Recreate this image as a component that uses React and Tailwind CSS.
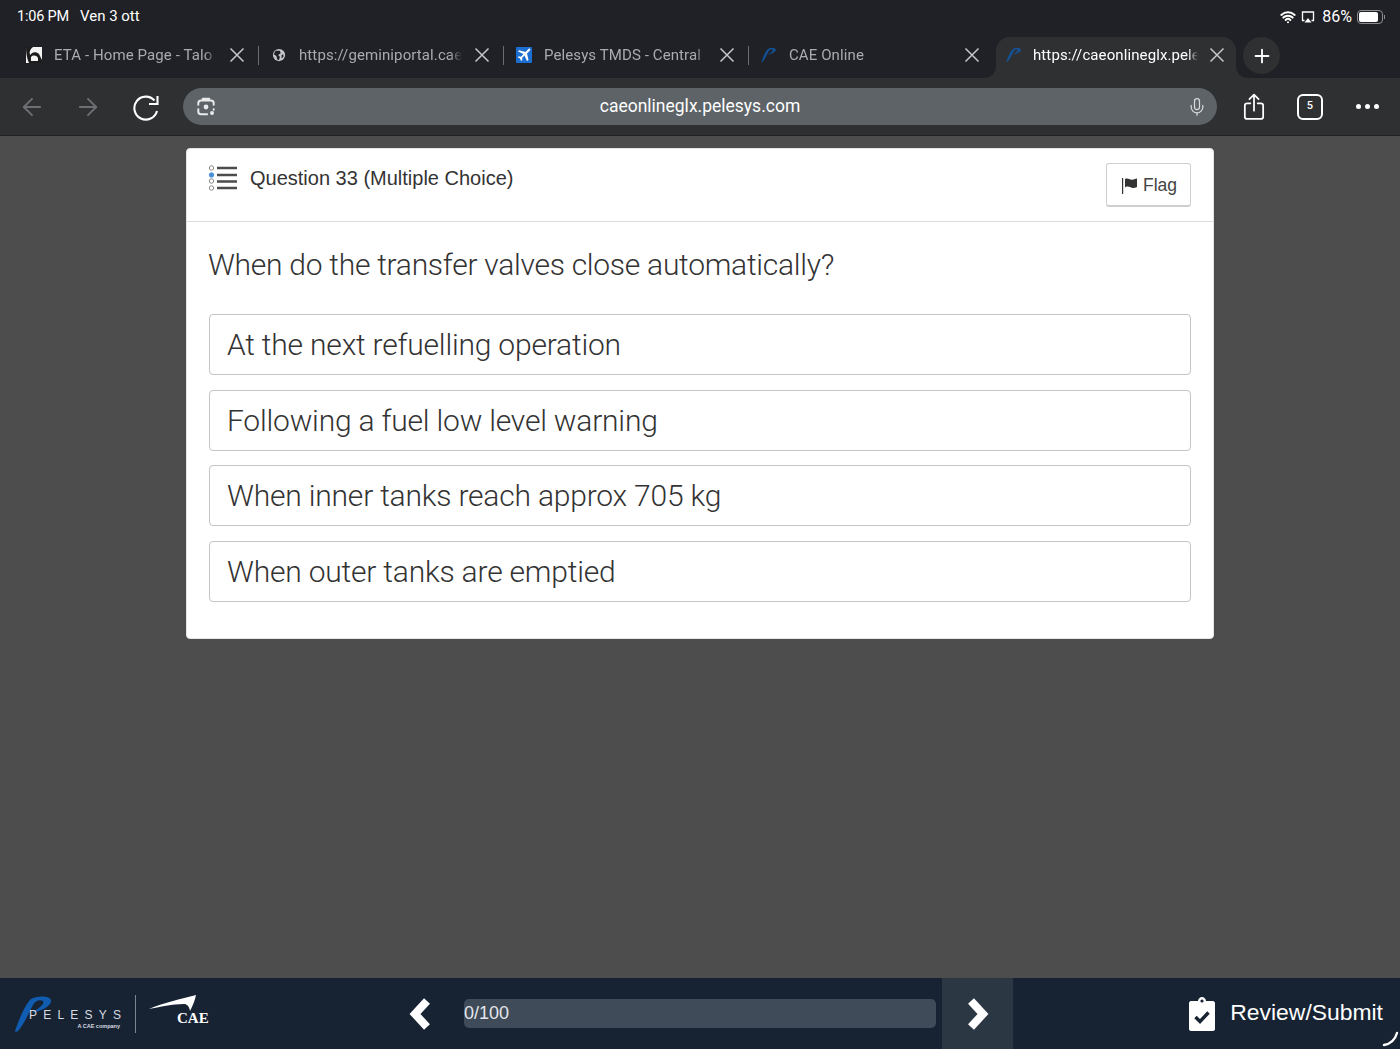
import React from 'react';
import { ArrowLeft, ArrowRight, Mic, Plus, Wifi } from 'lucide-react';

const tabs = [
  { title: 'ETA - Home Page - Talo', icon: 'eta' },
  { title: 'https://geminiportal.cae', icon: 'globe' },
  { title: 'Pelesys TMDS - Central', icon: 'plane' },
  { title: 'CAE Online', icon: 'pelesys' },
];

const answers = [
  'At the next refuelling operation',
  'Following a fuel low level warning',
  'When inner tanks reach approx 705 kg',
  'When outer tanks are emptied',
];

const PelesysMark = ({ className }) => (
  <svg viewBox="0 0 40 36" className={className}>
    <path d="M1 35 C5 24 10 10 17 3 C22 0 35 -1 37 4 C38 10 28 15 17 17 C24 13 31 8 29 5 C26 3 21 5 19 9 C15 16 11 27 4 35 C3 36 1 36 1 35 Z" fill="#0f5cb0" />
  </svg>
);

const CloseX = () => (
  <svg viewBox="0 0 16 16" className="w-4 h-4 shrink-0" fill="none" stroke="#c5c7ca" strokeWidth="1.5">
    <path d="M1.5 1.5 L14.5 14.5 M14.5 1.5 L1.5 14.5" />
  </svg>
);

const TabIcon = ({ type }) => {
  if (type === 'eta') {
    return (
      <svg viewBox="0 0 16 16" className="w-4 h-4 shrink-0">
        <rect width="16" height="16" fill="#f4f4f4" />
        <path d="M0 0 H7 C4 2 3 5 4 8 C6 5 10 4 13 7 L16 13 V16 H3 C1 12 0 6 0 0 Z" fill="#1c1c1c" />
        <path d="M5 10 C7 8 10 8 12 11 L12 14 H5 Z" fill="#f4f4f4" />
      </svg>
    );
  }
  if (type === 'globe') {
    return (
      <svg viewBox="0 0 16 16" className="w-3.5 h-3.5 shrink-0 mx-px">
        <circle cx="8" cy="8" r="7" fill="#c4c6c9" />
        <path d="M4 3 L9 3 L10 6 L7 8 L9 10 L8 14 L6 13 L5 9 L2 7 Z" fill="#1f2126" />
        <path d="M11 8 L13 7 L13 10 L11 12 Z" fill="#1f2126" />
      </svg>
    );
  }
  if (type === 'plane') {
    return (
      <svg viewBox="0 0 16 16" className="w-4 h-4 shrink-0">
        <rect width="16" height="16" rx="1" fill="#1c6fd1" />
        <path d="M13.5 1.5 C14.5 2 14.5 3 13.5 4 L11 6.5 L12.5 13 L11 14 L8.5 8.5 L6 11 L6.3 13 L5.2 14 L4 11.5 L1.8 10.3 L2.8 9.3 L5 9.7 L7.5 7 L2 4.5 L3 3.3 L9.5 5 L12 2.5 C12.5 2 13 1.3 13.5 1.5 Z" fill="#fff" />
      </svg>
    );
  }
  return <PelesysMark className="w-4 h-4 shrink-0 opacity-80" />;
};

const ReloadIcon = () => (
  <svg viewBox="0 0 28 28" className="w-7 h-7" fill="none" stroke="#fff" strokeWidth="2.1">
    <path d="M22.5 7.5 A11.5 11.5 0 1 0 25 18" />
    <path d="M25.5 3 V11 H17" />
  </svg>
);

const ShareIcon = () => (
  <svg viewBox="0 0 24 30" className="w-[22px] h-[28px]" fill="none" stroke="#fff" strokeWidth="1.9" strokeLinecap="round" strokeLinejoin="round">
    <path d="M12 19 V2 M7 6.5 L12 1.5 L17 6.5" />
    <path d="M8 11 H4.5 C3 11 2 12 2 13.5 V25.5 C2 27 3 28 4.5 28 H19.5 C21 28 22 27 22 25.5 V13.5 C22 12 21 11 19.5 11 H16" />
  </svg>
);

const LensIcon = () => (
  <svg viewBox="0 0 20 20" className="w-[22px] h-[22px]" fill="none" stroke="#e8eaec" strokeWidth="1.8" strokeLinecap="round">
    <path d="M7 2.5 H13 M3 8 V6.5 C3 5 4 4 5.5 4 H14.5 C16 4 17 5 17 6.5 V8 M3 12 V14 C3 15.5 4 16.5 5.5 16.5 H11" />
    <path d="M17 12 V12.5" />
    <circle cx="10" cy="10" r="2.2" fill="#e8eaec" stroke="none" />
    <circle cx="15.5" cy="15.5" r="1.8" fill="#e8eaec" stroke="none" />
  </svg>
);

const ListIcon = () => (
  <svg viewBox="0 0 30 26" className="w-[30px] h-[26px] shrink-0">
    {[2, 9, 15, 22].map((y, i) => (
      <circle key={y} cx="3.5" cy={y + 1} r="2.2" fill={i === 1 ? '#4a90d9' : '#fff'} stroke={i === 1 ? '#4a90d9' : '#8a8a8a'} strokeWidth="1" />
    ))}
    <path d="M9 3 H29 M9 10 H29 M9 16.5 H29 M9 23 H29" stroke="#4c4c4c" strokeWidth="2.6" />
  </svg>
);

const FlagIcon = () => (
  <svg viewBox="0 0 16 18" className="w-4 h-[18px]" fill="#333">
    <rect x="0" y="1" width="1.2" height="16" />
    <path d="M3 2 C6 0.5 8 3.5 11 2.5 C13 2 15 1.5 15 1.5 V10 C12 11.5 10 11 8 10 C6 9 4 9.5 3 10.5 Z" />
  </svg>
);

const ClipboardIcon = () => (
  <svg viewBox="0 0 26 34" className="w-[26px] h-[34px] shrink-0">
    <path d="M2 4 H9 C9 2 11 0 13 0 C15 0 17 2 17 4 H24 C25 4 26 5 26 6 V32 C26 33 25 34 24 34 H2 C1 34 0 33 0 32 V6 C0 5 1 4 2 4 Z" fill="#fff" />
    <circle cx="13" cy="4" r="1.6" fill="#172333" />
    <path d="M6.5 20 L11 24.5 L19.5 15.5" fill="none" stroke="#172333" strokeWidth="3.4" />
  </svg>
);

const Chevron = ({ dir }) => (
  <svg viewBox="0 0 24 34" className="w-6 h-[34px]">
    <path d={dir === 'left' ? 'M20 4 L8 17 L20 30' : 'M4 4 L16 17 L4 30'} fill="none" stroke="#fff" strokeWidth="8" />
  </svg>
);

const App = () => {
  return (
    <div className="w-[1400px] h-[1049px] flex flex-col overflow-hidden bg-[#4d4d4d] font-['Liberation_Sans',sans-serif]">
      {/* Browser chrome */}
      <div className="h-[78px] shrink-0 bg-[#1f2126] font-['Roboto',sans-serif]">
        <div className="h-[37px] pl-[17px] pr-[15px] pb-[4px] flex items-center justify-between text-white text-[15px]">
          <div className="flex items-center gap-[11px]">
            <span className="text-[14.5px] tracking-[-0.2px]">1:06 PM</span>
            <span>Ven 3 ott</span>
          </div>
          <div className="flex items-center gap-[5px]">
            <Wifi className="w-4 h-4" strokeWidth={3} />
            <svg viewBox="0 0 14 14" className="w-3.5 h-3.5" fill="none" stroke="#fff" strokeWidth="1.3">
              <path d="M3.5 10.5 H1.5 V2 H12.5 V10.5 H10.5" />
              <path d="M7 8 L10.5 12.5 H3.5 Z" fill="#fff" stroke="none" />
            </svg>
            <span className="ml-[2px] text-[16px]">86%</span>
            <div className="w-[26px] h-[14px] rounded-[4px] border border-[#8a8c90] p-[1px]">
              <div className="w-[86%] h-full rounded-[2px] bg-white" />
            </div>
            <div className="-ml-1 w-px h-1 bg-[#8a8c90]" />
          </div>
        </div>
        <div className="h-[41px] flex items-stretch pl-[12px]">
          {tabs.map((tab, i) => (
            <div key={tab.title} className="w-[245px] pb-[5px] flex items-center pl-[14px] relative">
              <TabIcon type={tab.icon} />
              <span className="ml-[12px] w-[163px] whitespace-nowrap text-[15px] tracking-[0.1px] text-[#a9abaf] [mask-image:linear-gradient(to_left,transparent,black_12px)]">{tab.title}</span>
              <div className="ml-[12px]"><CloseX /></div>
              {i < 3 && <div className="absolute -right-[2px] top-[9px] w-px h-[19px] bg-[#6b6d71]" />}
            </div>
          ))}
          <div className="ml-[4px] w-[240px] pb-[5px] relative rounded-t-[14px] bg-[#2e3032] flex items-center pl-[10px]">
            <svg viewBox="0 0 12 12" className="absolute -left-[12px] bottom-0 w-3 h-3"><path d="M12 0 V12 H0 C7 12 12 7 12 0 Z" fill="#2e3032" /></svg>
            <svg viewBox="0 0 12 12" className="absolute -right-[12px] bottom-0 w-3 h-3"><path d="M0 0 V12 H12 C5 12 0 7 0 0 Z" fill="#2e3032" /></svg>
            <PelesysMark className="w-4 h-4 shrink-0 opacity-80" />
            <span className="ml-[11px] w-[165px] whitespace-nowrap text-[15px] tracking-[0.1px] text-white [mask-image:linear-gradient(to_left,transparent,black_10px)]">https://caeonlineglx.pele</span>
            <div className="ml-[11px]"><CloseX /></div>
          </div>
          <div className="ml-[7px] w-[37px] h-[37px] rounded-full bg-[#2e3032] flex items-center justify-center">
            <Plus className="w-[22px] h-[22px] text-white" strokeWidth={2} />
          </div>
        </div>
      </div>

      <div className="h-[58px] shrink-0 bg-[#2e3032] border-b border-[#1f2126] flex items-center pl-[18px] pr-[18px] font-['Roboto',sans-serif]">
        <ArrowLeft className="w-7 h-7 text-[#6d6f72]" strokeWidth={1.6} />
        <ArrowRight className="ml-[28px] w-7 h-7 text-[#6d6f72]" strokeWidth={1.6} />
        <div className="ml-[30px]"><ReloadIcon /></div>
        <div className="ml-[23px] w-[1034px] h-[37px] rounded-full bg-[#5d6367] relative flex items-center justify-center">
          <div className="absolute left-[12px] top-[8px]"><LensIcon /></div>
          <span className="text-[17.5px] text-white">caeonlineglx.pelesys.com</span>
          <Mic className="absolute right-[10px] top-[8px] w-[20px] h-[22px] text-[#d5d7d9]" strokeWidth={1.5} />
        </div>
        <div className="ml-[26px]"><ShareIcon /></div>
        <div className="ml-[32px] w-[26px] h-[26px] rounded-[6px] border-2 border-white flex items-center justify-center text-[11px] font-medium text-white">5</div>
        <div className="ml-[33px] flex gap-[4px]">
          <div className="w-[5px] h-[5px] rounded-full bg-white" />
          <div className="w-[5px] h-[5px] rounded-full bg-white" />
          <div className="w-[5px] h-[5px] rounded-full bg-white" />
        </div>
      </div>

      {/* Question card */}
      <div className="flex-1 pt-[12px]">
        <div className="ml-[186px] w-[1028px] h-[491px] rounded-[4px] bg-white border border-[#e4e4e4] flex flex-col">
          <div className="h-[73px] shrink-0 border-b border-[#dcdcdc] pl-[21px] pr-[22px] flex justify-between">
            <div className="flex items-start pt-[16px] gap-[12px]">
              <ListIcon />
              <span className="text-[20px] leading-[26px] text-[#333]">Question 33 (Multiple Choice)</span>
            </div>
            <div className="mt-[14px] w-[85px] h-[44px] pt-[2px] pl-[2px] rounded-[3px] border border-[#cfcfcf] border-b-2 flex items-center justify-center gap-[5px] text-[17.5px] text-[#444]">
              <FlagIcon />
              <span>Flag</span>
            </div>
          </div>
          <div className="px-[22px] pt-[25px] font-['Roboto',sans-serif]">
            <p className="-ml-[1px] text-[30px] leading-[36px] font-light tracking-[-0.27px] text-[#333]">When do the transfer valves close automatically?</p>
            <div className="mt-[31px] flex flex-col gap-[14.7px]">
              {answers.map((answer) => (
                <div key={answer} className="h-[61px] rounded-[4px] border border-[#c4c4c4] pl-[17px] flex items-center text-[30px] font-light tracking-[-0.2px] text-[#333]">
                  {answer}
                </div>
              ))}
            </div>
          </div>
        </div>
      </div>

      {/* Footer */}
      <div className="h-[71px] shrink-0 bg-[#172333] flex items-stretch">
        <div className="w-[407px] flex items-center pl-[14px]">
          <div className="relative w-[110px] h-[36px]">
            <PelesysMark className="absolute left-0 top-0 w-[40px] h-[36px]" />
            <span className="absolute left-[15px] top-[12px] text-[12px] leading-[14px] tracking-[6.2px] text-[#d8dce0] whitespace-nowrap">PELESYS</span>
            <span className="absolute right-[4px] top-[27px] text-[5.5px] leading-[6px] font-bold text-[#d8dce0] whitespace-nowrap">A CAE company</span>
          </div>
          <div className="ml-[11px] w-px h-[38px] bg-[#7c8590]" />
          <div className="ml-[13px] -mt-[5px] relative w-[60px] h-[32px]">
            <svg viewBox="0 0 50 18" className="absolute left-0 top-0 w-[50px] h-[18px]">
              <path d="M0 14 C14 8 32 4 47 0 C46 5 44 10 41 16 C40 11 38 9 35 9 C24 9 10 12 0 14 Z" fill="#fff" />
            </svg>
            <span className="absolute left-[28px] top-[15px] text-[15px] leading-[17px] font-bold text-white font-['Liberation_Serif',serif]">CAE</span>
          </div>
        </div>
        <div className="flex items-center"><Chevron dir="left" /></div>
        <div className="ml-[33px] flex items-center">
          <div className="w-[472px] h-[29px] rounded-[5px] bg-[#3f4b59] text-[18px] leading-[29px] text-[#e4e6e9]">0/100</div>
        </div>
        <div className="ml-[6px] w-[71px] pl-[3px] bg-[#2c3744] flex items-center justify-center"><Chevron dir="right" /></div>
        <div className="flex-1 relative flex items-center justify-end pr-[17px] gap-[15px]">
          <ClipboardIcon />
          <span className="text-[22.9px] pb-[2px] text-white">Review/Submit</span>
          <svg viewBox="0 0 18 16" className="absolute right-0 bottom-[2px] w-[18px] h-[16px]" fill="none" stroke="#fff" strokeWidth="2.4" strokeLinecap="round">
            <path d="M2 14 C8 13 13 9 15 2" />
          </svg>
        </div>
      </div>
    </div>
  );
};

export default App;
